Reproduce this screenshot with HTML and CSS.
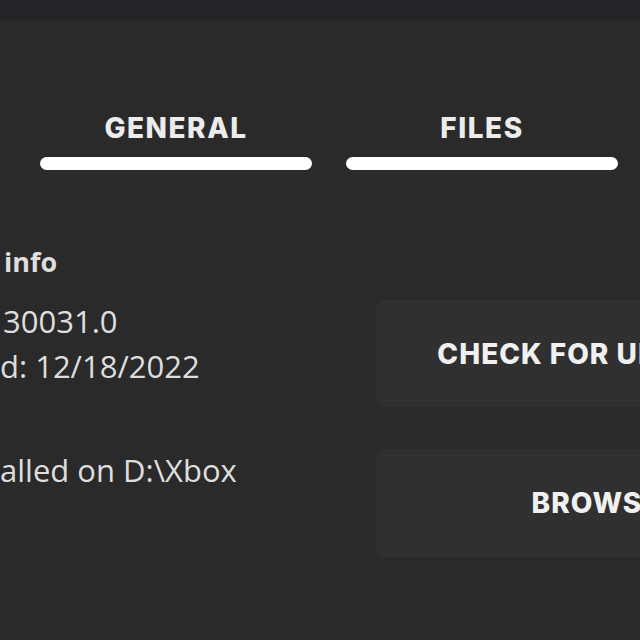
FILE: index.html
```html
<!DOCTYPE html>
<html lang="en">
<head>
<meta charset="utf-8">
<title>Settings</title>
<link rel="stylesheet" href="styles.css">
</head>
<body>
<div class="topbar"></div>
<main class="page">
  <nav class="tabs">
    <div class="tab">
      <span class="tab-label">GENERAL</span>
      <span class="tab-bar"></span>
    </div>
    <div class="tab">
      <span class="tab-label">FILES</span>
      <span class="tab-bar"></span>
    </div>
  </nav>
  <section class="content">
    <div class="info">
      <p class="line heading"><span class="cut">App</span> info</p>
      <p class="line version"><span class="cut">Version 1.0.2211.1</span>30031.0</p>
      <p class="line date"><span class="cut">Last update</span>d: 12/18/2022</p>
      <p class="line location"><span class="cut">Inst</span>alled on D:\Xbox</p>
    </div>
    <div class="actions">
      <button class="action">CHECK FOR UPDATES</button>
      <button class="action">BROWSE</button>
    </div>
  </section>
</main>
</body>
</html>
```

FILE: styles.css
```css
html, body {
  margin: 0;
  padding: 0;
  width: 640px;
  height: 640px;
  overflow: hidden;
  background: #2a2a2a;
  color: #e6e6e6;
  font-family: "Open Sans", "Noto Sans", sans-serif;
}

.topbar {
  height: 20px;
  background: #242529;
}

.page {
  display: flex;
  flex-direction: column;
}

.tabs {
  display: flex;
  gap: 34px;
  padding-left: 40px;
  margin-top: 92px;
}

.tab {
  width: 272px;
  display: flex;
  flex-direction: column;
  align-items: center;
}

.tab-label {
  font-family: Inter, "Open Sans", sans-serif;
  font-weight: 800;
  font-size: 28px;
  line-height: 32px;
  letter-spacing: 1.5px;
  color: #ececec;
}

.tab-bar {
  display: block;
  width: 100%;
  height: 13px;
  margin-top: 13px;
  border-radius: 7px;
  background: #ffffff;
}

.content {
  display: flex;
  margin-top: 72px;
}

.info {
  width: 376px;
  flex: none;
  overflow: hidden;
}

.line {
  margin: 0;
  white-space: nowrap;
  font-size: 31px;
  line-height: 45px;
  color: #dedede;
}

.line .cut {
  display: inline-block;
  width: 300px;
  margin-left: -300px;
  overflow: hidden;
  text-align: right;
  vertical-align: bottom;
}

.heading {
  font-weight: 700;
  font-size: 27px;
  line-height: 40px;
  margin-bottom: 17px;
  margin-left: -3px;
}

.version {
  padding-left: 3px;
}

.location {
  margin-top: 59px;
}

.actions {
  display: flex;
  flex-direction: column;
  gap: 42px;
  margin-top: 58px;
}

.action {
  width: 440px;
  height: 107px;
  border: 1px solid #323232;
  border-radius: 8px;
  background: #303030;
  color: #f0f0f0;
  font-family: Inter, "Open Sans", sans-serif;
  font-weight: 800;
  font-size: 28px;
  letter-spacing: 1px;
  text-align: center;
  padding: 0;
}

.action + .action {
  height: 108px;
}
```
